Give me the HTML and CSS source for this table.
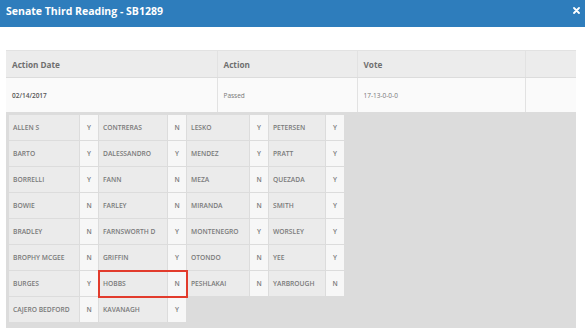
FILE: index.html
```html
<!DOCTYPE html>
<html lang="en">
<head>
    <meta charset="UTF-8">
    <meta name="viewport" content="width=device-width, initial-scale=1.0">
    <meta name="format-detection" content="telephone=no">
    <title>Senate Third Reading - SB1289</title>
    <link rel="stylesheet" href="styles.css">
</head>
<body>
    <div class="modal">
        <div class="modal-header">
            <h2>Senate Third Reading - SB1289</h2>
            <button class="close-button" aria-label="Close">
                <svg width="7" height="7" viewBox="0 0 7 7"><path d="M1 1L6 6M6 1L1 6" stroke="#fff" stroke-width="1.8" stroke-linecap="round"/></svg>
            </button>
        </div>

        <div class="modal-body">
            <table class="actions">
                <colgroup>
                    <col class="col-date">
                    <col class="col-action">
                    <col class="col-vote">
                    <col>
                </colgroup>
                <thead>
                    <tr><th>Action Date</th><th>Action</th><th>Vote</th><th></th></tr>
                </thead>
                <tbody>
                    <tr class="action-row"><td>02/14/2017</td><td>Passed</td><td>17-13-0-0-0</td><td></td></tr>
                    <tr>
                        <td colspan="4" class="votes-cell">
                            <div class="votes">
                                <table class="vote-col">
                                    <tr><td>ALLEN S</td><td>Y</td></tr>
                                    <tr><td>BARTO</td><td>Y</td></tr>
                                    <tr><td>BORRELLI</td><td>Y</td></tr>
                                    <tr><td>BOWIE</td><td>N</td></tr>
                                    <tr><td>BRADLEY</td><td>N</td></tr>
                                    <tr><td>BROPHY MCGEE</td><td>N</td></tr>
                                    <tr><td>BURGES</td><td>Y</td></tr>
                                    <tr><td>CAJERO BEDFORD</td><td>N</td></tr>
                                </table>
                                <table class="vote-col">
                                    <tr><td>CONTRERAS</td><td>N</td></tr>
                                    <tr><td>DALESSANDRO</td><td>Y</td></tr>
                                    <tr><td>FANN</td><td>N</td></tr>
                                    <tr><td>FARLEY</td><td>N</td></tr>
                                    <tr><td>FARNSWORTH D</td><td>Y</td></tr>
                                    <tr><td>GRIFFIN</td><td>Y</td></tr>
                                    <tr class="highlight"><td>HOBBS</td><td>N</td></tr>
                                    <tr><td>KAVANAGH</td><td>Y</td></tr>
                                </table>
                                <table class="vote-col">
                                    <tr><td>LESKO</td><td>Y</td></tr>
                                    <tr><td>MENDEZ</td><td>Y</td></tr>
                                    <tr><td>MEZA</td><td>N</td></tr>
                                    <tr><td>MIRANDA</td><td>N</td></tr>
                                    <tr><td>MONTENEGRO</td><td>Y</td></tr>
                                    <tr><td>OTONDO</td><td>N</td></tr>
                                    <tr><td>PESHLAKAI</td><td>N</td></tr>
                                </table>
                                <table class="vote-col">
                                    <tr><td>PETERSEN</td><td>Y</td></tr>
                                    <tr><td>PRATT</td><td>Y</td></tr>
                                    <tr><td>QUEZADA</td><td>Y</td></tr>
                                    <tr><td>SMITH</td><td>Y</td></tr>
                                    <tr><td>WORSLEY</td><td>Y</td></tr>
                                    <tr><td>YEE</td><td>Y</td></tr>
                                    <tr><td>YARBROUGH</td><td>N</td></tr>
                                </table>
                            </div>
                        </td>
                    </tr>
                </tbody>
            </table>
        </div>
    </div>
</body>
</html>
```

FILE: styles.css
```css
body {
    margin: 0;
    background-color: #fff;
    font-family: "Open Sans", "Noto Sans", Arial, sans-serif;
    overflow: hidden;
}
.modal-header {
    height: 27px;
    background-color: #2e7dbc;
    display: flex;
    align-items: center;
    justify-content: space-between;
    padding: 0 5px 6px 6px;
    box-sizing: border-box;
}
.modal-header h2 {
    margin: 0;
    font-size: 10.5px;
    font-weight: 700;
    color: #fff;
}
.close-button {
    background: none;
    border: none;
    padding: 0;
    display: flex;
    cursor: pointer;
}
.modal-body {
    padding: 23px 9px 0 6px;
}
.actions {
    width: 100%;
    border-collapse: collapse;
    border-top: 1px solid #e2e2e2;
}
.col-date { width: 211px; }
.col-action { width: 140px; }
.col-vote { width: 168px; }
.actions th {
    height: 26px;
    padding: 0 6px;
    text-align: left;
    font-size: 8.2px;
    font-weight: 700;
    color: #6f6f6f;
    background-color: #ececec;
    border-left: 1px solid #e2e2e2;
    border-bottom: 1px solid #dcdcdc;
}
.actions th:first-child,
.action-row td:first-child {
    border-left: none;
}
.action-row td {
    height: 34px;
    padding: 0 6px;
    font-size: 6.5px;
    color: #777;
    background-color: #fafafa;
    border-left: 1px solid #e2e2e2;
}
.action-row td:first-child {
    font-weight: 600;
    color: #555;
}
.votes-cell {
    padding: 2px 0 5px 2px;
    background-color: #dcdcdc;
}
.votes {
    display: flex;
    align-items: flex-start;
}
.vote-col {
    border-collapse: collapse;
}
.vote-col + .vote-col {
    margin-left: -1px;
}
.vote-col tr {
    height: 26px;
}
.vote-col td {
    padding: 0 4px;
    font-size: 6.7px;
    font-weight: 600;
    color: #7a7a7a;
    background-color: #ebebeb;
    border: 1px solid #dcdcdc;
    white-space: nowrap;
}
.vote-col td:last-child {
    width: 18px;
    padding: 0;
    text-align: center;
    background-color: #f7f7f7;
}
.vote-col:nth-child(1) td:first-child { width: 62px; }
.vote-col:nth-child(2) td:first-child { width: 60px; }
.vote-col:nth-child(3) td:first-child { width: 54px; }
.vote-col:nth-child(4) td:first-child { width: 48px; }

/* red frame drawn above the neighbouring cells */
.highlight {
    position: relative;
    z-index: 1;
    outline: 2px solid #e23b2c;
    outline-offset: -1px;
}
```
